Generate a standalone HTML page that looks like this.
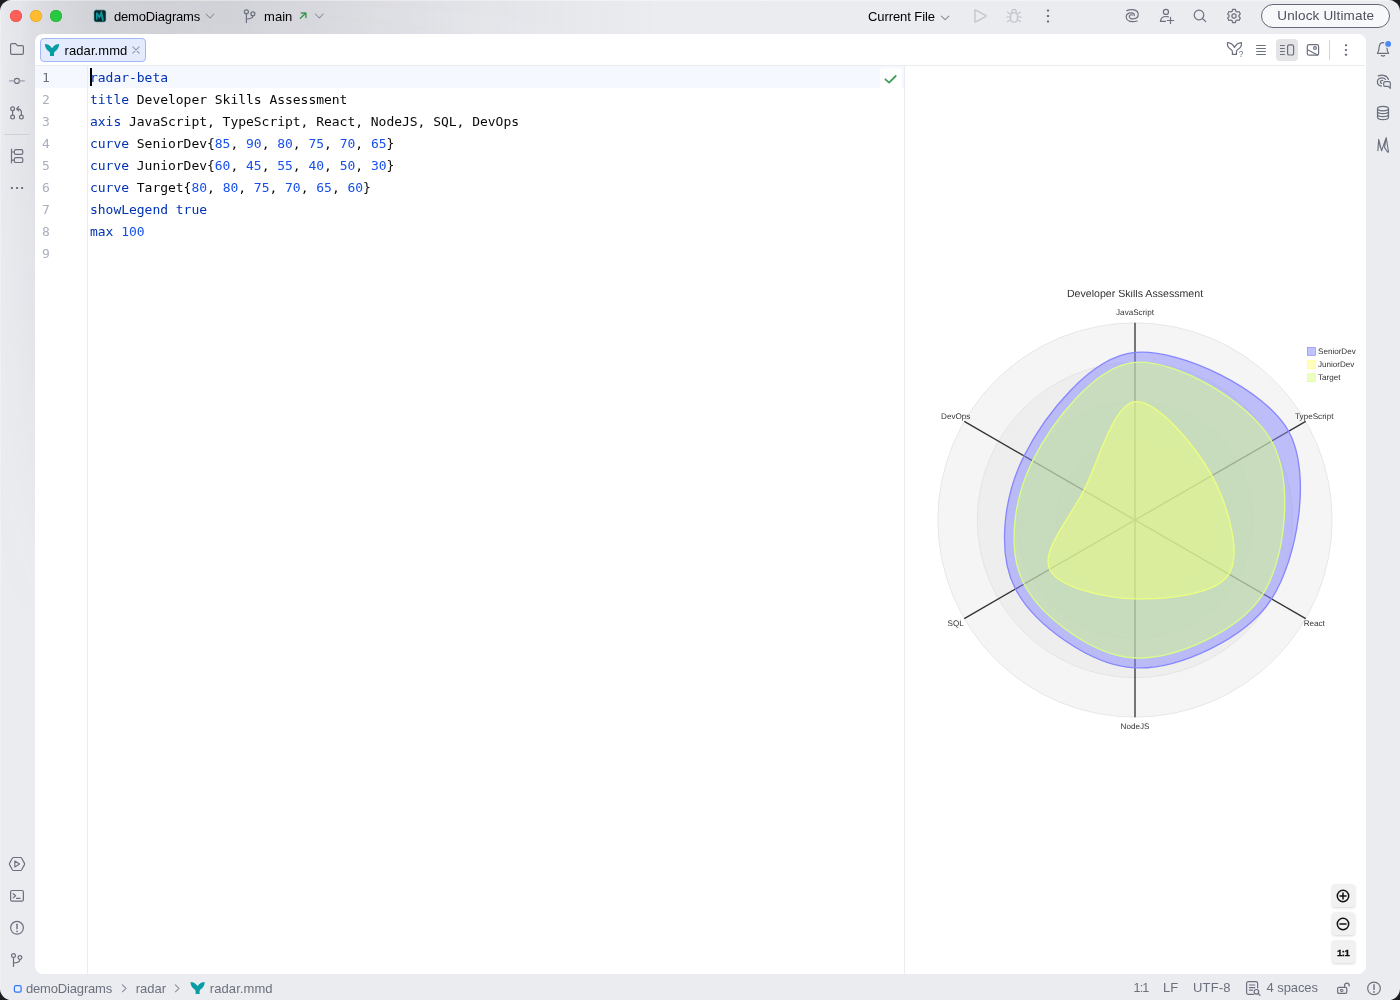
<!DOCTYPE html>
<html lang="en">
<head>
<meta charset="utf-8">
<title>radar.mmd</title>
<style>
*{box-sizing:border-box;margin:0;padding:0}
html,body{width:1400px;height:1000px;overflow:hidden;background:#1b1c1f;font-family:"Liberation Sans",sans-serif;}
.win{will-change:transform;position:absolute;left:0;top:0;width:1400px;height:1000px;border-radius:11.5px;background:#ebecf0;overflow:hidden;}
.tgrad{position:absolute;left:0;top:0;width:700px;height:700px;background:
 linear-gradient(to right, rgba(98,98,112,.015) 0px, rgba(98,98,112,.03) 8px, rgba(98,98,112,.055) 20px, rgba(98,98,112,.10) 35px, rgba(98,98,112,.13) 48px, rgba(98,98,112,.185) 90px, rgba(98,98,112,.205) 150px, rgba(98,98,112,.185) 240px, rgba(98,98,112,.14) 320px, rgba(98,98,112,.08) 430px, rgba(98,98,112,.03) 540px, rgba(98,98,112,0) 660px);
 -webkit-mask-image:linear-gradient(to bottom, #000 0px, rgba(0,0,0,.92) 34px, rgba(0,0,0,.85) 110px, rgba(0,0,0,.45) 330px, rgba(0,0,0,.12) 520px, transparent 640px);mask-image:linear-gradient(to bottom, #000 0px, rgba(0,0,0,.92) 34px, rgba(0,0,0,.85) 110px, rgba(0,0,0,.45) 330px, rgba(0,0,0,.12) 520px, transparent 640px);}
.thl{position:absolute;left:0;top:0;width:1400px;height:1000px;background:linear-gradient(to bottom, rgba(255,255,255,.55) 0px, rgba(255,255,255,0) 1.5px),linear-gradient(to right, rgba(255,255,255,.4) 0px, rgba(255,255,255,0) 1.5px)}
.abs{position:absolute}
.ui{font-size:13px;color:#000;white-space:nowrap;line-height:16px}
svg.ic{position:absolute;overflow:visible;fill:none;stroke:#6c707e;stroke-width:1.2;stroke-linecap:round;stroke-linejoin:round}
.island{position:absolute;left:35px;top:34px;width:1330.6px;height:940px;background:#fff;border-radius:8px;overflow:hidden}
.tabline{position:absolute;left:0;top:31px;width:1330px;height:1px;background:#ebecf0}
.tab{position:absolute;left:5.2px;top:4px;width:105.5px;height:24px;border:1px solid #a0b9f5;background:#e3ebfd;border-radius:4px}
.gutline{position:absolute;left:52px;top:32px;width:1px;height:908px;background:#ebecf0}
.split{position:absolute;left:869px;top:32px;width:1px;height:908px;background:#ebecf0}
.curline{position:absolute;left:0;top:32px;width:869px;height:22px;background:#f5f8fe}
.code{position:absolute;left:55px;top:33px;font-family:"DejaVu Sans Mono","Liberation Mono",monospace;font-size:13px;letter-spacing:-.027px;line-height:22px;color:#080808;white-space:pre}
.code .k{color:#0033b3}.code .n{color:#1750eb}
.ln{position:absolute;left:7px;top:33px;font-family:"DejaVu Sans Mono","Liberation Mono",monospace;font-size:13px;line-height:22px;color:#a9aebe;white-space:pre}
.ln b{font-weight:normal;color:#6c707e}
.caret{position:absolute;left:55px;top:34.2px;width:2px;height:17.4px;background:#000}
.radar{position:absolute;left:870px;top:256px;width:460px;height:460px;font-family:"Liberation Sans",sans-serif;text-rendering:geometricPrecision}
.radar text.al{font-size:12.35px;fill:#333;text-anchor:middle;dominant-baseline:middle}
.radar text.lt{font-size:12.3px;fill:#333;dominant-baseline:hanging}
.radar text.tt{font-size:16.15px;fill:#333;text-anchor:middle;dominant-baseline:hanging}
.zb{position:absolute;left:1296.5px;width:23px;height:22.5px;background:#f1f1f1;border-radius:3.5px;box-shadow:0 .5px 2.5px rgba(0,0,0,.16)}
.st{position:absolute;top:981px;font-size:13px;line-height:16px;color:#6c707e;white-space:nowrap}
</style>
</head>
<body>
<div class="win">
<div class="tgrad"></div><div class="thl"></div>

<!-- traffic lights -->
<div class="abs" style="left:10px;top:10px;width:12px;height:12px;border-radius:50%;background:#fe5f57;box-shadow:inset 0 0 0 .5px #e14640"></div>
<div class="abs" style="left:30px;top:10px;width:12px;height:12px;border-radius:50%;background:#febc2e;box-shadow:inset 0 0 0 .5px #e0a028"></div>
<div class="abs" style="left:50px;top:10px;width:12px;height:12px;border-radius:50%;background:#28c840;box-shadow:inset 0 0 0 .5px #1eab2f"></div>

<!-- project widget -->
<div class="ui abs" style="left:114px;top:9px;letter-spacing:-.17px">demoDiagrams</div>

<!-- branch widget -->
<div class="ui abs" style="left:264px;top:9px;letter-spacing:.05px">main</div>

<!-- run widget -->
<div class="ui abs" style="left:868px;top:9px;letter-spacing:-.08px">Current File</div>

<!-- right header icons -->
<div class="abs" style="left:1261px;top:3.8px;width:129px;height:24px;border:1.5px solid #646878;border-radius:12px;background:#f7f8fa"></div>
<div class="ui abs" style="left:1277.3px;top:8px;font-size:13.5px;letter-spacing:.16px;color:#4d5160">Unlock Ultimate</div>

<!-- left stripe -->


<!-- right stripe -->

<!-- editor island -->
<div class="island">
  <div class="tab"></div>
  <div class="ui abs" style="left:29.6px;top:9px;letter-spacing:.07px">radar.mmd</div>
  <div class="tabline"></div>

  <!-- editor toolbar icons -->
  <div class="abs" style="left:1241px;top:5px;width:22px;height:22px;border-radius:4px;background:#e4e4e7"></div>
  
  <!-- editor -->
  <div class="curline"></div>
  <div class="gutline"></div>
  <div class="split"></div>
  <div class="ln"><b>1</b>
2
3
4
5
6
7
8
9</div>
  <div class="code"><span class="k">radar-beta</span>
<span class="k">title</span> Developer Skills Assessment
<span class="k">axis</span> JavaScript, TypeScript, React, NodeJS, SQL, DevOps
<span class="k">curve</span> SeniorDev{<span class="n">85</span>, <span class="n">90</span>, <span class="n">80</span>, <span class="n">75</span>, <span class="n">70</span>, <span class="n">65</span>}
<span class="k">curve</span> JuniorDev{<span class="n">60</span>, <span class="n">45</span>, <span class="n">55</span>, <span class="n">40</span>, <span class="n">50</span>, <span class="n">30</span>}
<span class="k">curve</span> Target{<span class="n">80</span>, <span class="n">80</span>, <span class="n">75</span>, <span class="n">70</span>, <span class="n">65</span>, <span class="n">60</span>}
<span class="k">showLegend</span> <span class="k">true</span>
<span class="k">max</span> <span class="n">100</span>
</div>
  <div class="caret"></div>
  <div class="abs" style="left:845px;top:33.7px;width:22.3px;height:24px;background:#fff;border-radius:3.5px 3.5px 0 0"></div>

  <!-- preview -->
  <svg class="radar" viewBox="-350 -350 700 700">
<g>
<circle r="60" fill="#DEDEDE" fill-opacity="0.3" stroke="#DEDEDE" stroke-width="1"/>
<circle r="120" fill="#DEDEDE" fill-opacity="0.3" stroke="#DEDEDE" stroke-width="1"/>
<circle r="180" fill="#DEDEDE" fill-opacity="0.3" stroke="#DEDEDE" stroke-width="1"/>
<circle r="240" fill="#DEDEDE" fill-opacity="0.3" stroke="#DEDEDE" stroke-width="1"/>
<circle r="300" fill="#DEDEDE" fill-opacity="0.3" stroke="#DEDEDE" stroke-width="1"/>
<line x1="0" y1="0" x2="0" y2="-300" stroke="#333" stroke-width="2"/>
<text x="0" y="-315" class="al">JavaScript</text>
<line x1="0" y1="0" x2="259.81" y2="-150" stroke="#333" stroke-width="2"/>
<text x="272.8" y="-157.5" class="al">TypeScript</text>
<line x1="0" y1="0" x2="259.81" y2="150" stroke="#333" stroke-width="2"/>
<text x="272.8" y="157.5" class="al">React</text>
<line x1="0" y1="0" x2="0" y2="300" stroke="#333" stroke-width="2"/>
<text x="0" y="315" class="al">NodeJS</text>
<line x1="0" y1="0" x2="-259.81" y2="150" stroke="#333" stroke-width="2"/>
<text x="-272.8" y="157.5" class="al">SQL</text>
<line x1="0" y1="0" x2="-259.81" y2="-150" stroke="#333" stroke-width="2"/>
<text x="-272.8" y="-157.5" class="al">DevOps</text>
<path d="M0,-255 C68.46,-261.38 198.49,-198.75 233.83,-135 C269.16,-71.25 247.6,58.8 207.85,120 C168.1,181.2 66.25,227.55 0,225 C-66.25,222.45 -153.16,159.83 -181.87,105 C-210.57,50.18 -199.79,-36.3 -168.87,-97.5 C-137.96,-158.7 -68.46,-248.62 0,-255 Z" fill="hsl(240,100%,76.27%)" fill-opacity="0.5" stroke="hsl(240,100%,76.27%)" stroke-width="2"/>
<path d="M0,-180 C33.13,-183.82 92.62,-112.12 116.91,-67.5 C141.21,-22.88 162.77,50.62 142.89,82.5 C123.02,114.37 46.38,121.27 0,120 C-46.38,118.73 -116.65,103.05 -129.9,75 C-143.15,46.95 -100.03,-1.65 -77.94,-45 C-55.86,-88.35 -33.13,-176.18 0,-180 Z" fill="hsl(60,100%,73.53%)" fill-opacity="0.5" stroke="hsl(60,100%,73.53%)" stroke-width="2"/>
<path d="M0,-240 C61.83,-245.1 174.72,-179.93 207.85,-120 C240.97,-60.08 230.19,56.4 194.86,112.5 C159.52,168.6 61.83,212.55 0,210 C-61.83,207.45 -142.37,148.5 -168.87,97.5 C-195.38,46.5 -184.59,-32.62 -155.88,-90 C-127.18,-147.38 -61.83,-234.9 0,-240 Z" fill="hsl(80,100%,76.27%)" fill-opacity="0.5" stroke="hsl(80,100%,76.27%)" stroke-width="2"/>
<g transform="translate(262.5,-262.5)"><rect width="12" height="12" fill="hsl(240,100%,76.27%)" fill-opacity="0.5" stroke="hsl(240,100%,76.27%)"/><text x="16" y="1.2" class="lt">SeniorDev</text></g>
<g transform="translate(262.5,-242.5)"><rect width="12" height="12" fill="hsl(60,100%,73.53%)" fill-opacity="0.5" stroke="hsl(60,100%,73.53%)"/><text x="16" y="1.2" class="lt">JuniorDev</text></g>
<g transform="translate(262.5,-222.5)"><rect width="12" height="12" fill="hsl(80,100%,76.27%)" fill-opacity="0.5" stroke="hsl(80,100%,76.27%)"/><text x="16" y="1.2" class="lt">Target</text></g>
<text x="0" y="-350" class="tt">Developer Skills Assessment</text>
</g></svg>

  <div class="zb" style="top:850.5px"></div>
  <div class="zb" style="top:878.5px"></div>
  <div class="zb" style="top:906.5px"></div>
  <div class="abs" style="left:1296.5px;top:906px;width:23px;height:24px;line-height:24px;text-align:center;font-size:9.6px;font-weight:bold;color:#111;letter-spacing:-.45px;-webkit-text-stroke:.3px #111;padding-left:.5px;padding-top:1px">1:1</div>
</div>

<svg class="ic" style="left:0;top:0" width="1400" height="1000" viewBox="0 0 1400 1000">
<!-- project icon -->
<rect x="94.2" y="10.2" width="11.5" height="11.5" rx="2" fill="#04292d" stroke="#0a5258" stroke-width=".5"/>
<path d="M96 19.7 V12.4 H97.5 L99.3 15.6 L101.1 11.1 H102 L104 20.7 H102 L100.9 16 L99.6 18.6 H99 L97.5 15.8 V19.7 Z" fill="#0c959c" stroke="none"/>
<path d="M206 14 L210 18 L214 14" stroke="#878b98" stroke-width="1.05"/>
<!-- branch -->
<circle cx="246.4" cy="11.8" r="2"/><circle cx="252.9" cy="13.8" r="2"/>
<path d="M246.4 13.8 V22.6 M252.9 15.8 C252.9 18 251 19 246.4 19"/>
<path d="M300.4 18.3 L305.8 12.9 M301.4 12.9 H305.9 V17.4" stroke="#3a9a55" stroke-width="1.45"/>
<path d="M315.4 14 L319.3 18 L323.2 14" stroke="#878b98" stroke-width="1.05"/>
<!-- run widget -->
<path d="M941.3 16.1 L945.1 19.7 L948.9 16.1" stroke="#878b98" stroke-width="1.05"/>
<path d="M975 10.6 V21.4 Q975 22.4 975.9 21.9 L985.6 16.6 Q986.4 16 985.6 15.4 L975.9 10.1 Q975 9.6 975 10.6 Z" stroke="#c3c6cf" stroke-width="1.4"/>
<g stroke="#c3c6cf" stroke-width="1.25">
<rect x="1010.6" y="12.7" width="6.8" height="9.4" rx="3.3"/>
<path d="M1011.7 12.7 C1011.7 8.4 1016.3 8.4 1016.3 12.7"/>
<path d="M1010.6 14.2 L1007.6 12.2 M1010.6 17 H1007 M1010.6 19.6 L1007.6 21.6 M1017.4 14.2 L1020.4 12.2 M1017.4 17 H1021 M1017.4 19.6 L1020.4 21.6"/>
</g>
<g fill="#6c707e" stroke="none"><rect x="1046.9" y="9.4" width="2.2" height="2.2" rx=".5"/><rect x="1046.9" y="14.9" width="2.2" height="2.2" rx=".5"/><rect x="1046.9" y="20.4" width="2.2" height="2.2" rx=".5"/></g>
<!-- AI swirl -->
<path d="M1126.9 10.6 C1128.6 9.7 1130.5 9.5 1132.4 9.6 C1135.8 9.8 1138.2 11.8 1138.2 14.6 C1138.2 17.2 1136 18.9 1133 18.9 C1130.6 18.9 1129.2 17.8 1129.3 16.4 C1129.4 15.1 1131 14.4 1132.6 15"/><path d="M1134.3 15.6 C1134.6 14 1133.2 12.7 1131.2 12.8 C1128.4 12.9 1126.2 14.4 1126.2 16.8 C1126.2 19.6 1128.8 21.7 1132.4 21.7 C1134.2 21.7 1135.8 21.5 1137.2 21"/>
<!-- add user -->
<circle cx="1165.95" cy="11.9" r="2.55"/><path d="M1165.4 21.4 H1160.4 C1160.8 18.6 1162.8 16.5 1166 16.5 C1166.9 16.5 1167.7 16.6 1168.4 16.8 M1170.5 17.4 V23.6 M1167.3 20.5 H1173.7"/>
<!-- search -->
<circle cx="1199" cy="15" r="4.8"/><path d="M1202.5 18.5 L1205.7 21.7"/>
<!-- gear -->
<path d="M1232.17 11.24 L1232.61 9.45 L1235.39 9.45 L1235.83 11.24 L1237.21 12.04 L1238.98 11.52 L1240.37 13.93 L1239.04 15.20 L1239.04 16.80 L1240.37 18.07 L1238.98 20.48 L1237.21 19.96 L1235.83 20.76 L1235.39 22.55 L1232.61 22.55 L1232.17 20.76 L1230.79 19.96 L1229.02 20.48 L1227.63 18.07 L1228.96 16.80 L1228.96 15.20 L1227.63 13.93 L1229.02 11.52 L1230.79 12.04 Z"/><circle cx="1234" cy="16" r="2.1"/>

<!-- left stripe -->
<path d="M10.6 45 a1.3 1.3 0 0 1 1.3 -1.3 H15.6 L17.4 45.6 H22.1 a1.3 1.3 0 0 1 1.3 1.3 V53 a1.3 1.3 0 0 1 -1.3 1.3 H11.9 a1.3 1.3 0 0 1 -1.3 -1.3 Z"/>
<circle cx="16.9" cy="80.9" r="2.5"/><path d="M9.6 80.9 H14.4 M19.4 80.9 H24.3" stroke="#9a9eab" stroke-width="1.3"/>
<circle cx="12.6" cy="108.8" r="1.9"/><circle cx="12.6" cy="117.1" r="1.9"/><circle cx="21.4" cy="117.1" r="1.9"/>
<path d="M12.6 110.7 V115.2 M21.4 115.2 V112 C21.4 109.8 20 108.8 17 108.8 M18.7 106.7 L16.6 108.8 L18.7 110.9"/>
<path d="M5 134.5 H29" stroke="#cfd1d8" stroke-width="1"/>
<path d="M11.5 149.2 V162.8 M11.5 152 H14.3 M11.5 160.1 H14.3"/><rect x="14.3" y="149.6" width="8.5" height="4.8" rx="1.6"/><rect x="14.3" y="157.7" width="8.5" height="4.8" rx="1.6"/>
<g fill="#6c707e" stroke="none"><rect x="10.9" y="187" width="2" height="2" rx=".3"/><rect x="16.1" y="187" width="2" height="2" rx=".3"/><rect x="21.1" y="187" width="2" height="2" rx=".3"/></g>
<!-- bottom-left -->
<path d="M13.4 857.5 H20.6 Q21.2 857.5 21.5 858 L24.5 863.4 Q24.8 864 24.5 864.6 L21.5 870 Q21.2 870.5 20.6 870.5 H13.4 Q12.8 870.5 12.5 870 L9.5 864.6 Q9.2 864 9.5 863.4 L12.5 858 Q12.8 857.5 13.4 857.5 Z"/><path d="M14.8 861 L19.6 864 L14.8 867 Z" stroke-width="1.1"/>
<rect x="10.6" y="890.5" width="12.8" height="10.6" rx="1.7"/><path d="M13.2 893.7 L15.6 895.8 L13.2 897.9 M16.6 898.4 H20"/>
<circle cx="17" cy="927.8" r="6.4"/><path d="M17 924.2 V928.8" stroke-width="1.4"/><circle cx="17" cy="931.3" r=".85" fill="#6c707e" stroke="none"/>
<circle cx="13.5" cy="955.6" r="1.9"/><circle cx="19.9" cy="957.5" r="1.9"/><path d="M13.5 957.5 V966.4 M19.9 959.4 C19.9 961.8 18 962.8 13.5 962.8"/>

<!-- right stripe -->
<path d="M1377.4 53.3 C1378.9 51.4 1378.9 49.8 1379.1 47.5 C1379.4 44.5 1380.8 42.7 1383 42.7 C1385.2 42.7 1386.6 44.5 1386.9 47.5 C1387.1 49.8 1387.1 51.4 1388.6 53.3 Z"/><path d="M1381.4 55.6 Q1383 56.8 1384.6 55.6" stroke-width="1.3"/>
<circle cx="1388.15" cy="43.9" r="4.1" fill="#ebecf0" stroke="none"/>
<circle cx="1388.15" cy="43.9" r="2.9" fill="#4b87f5" stroke="none"/>
<path d="M1378.3 75.9 C1380 75.2 1382 75 1383.6 75.3 C1386 75.8 1387.8 77.3 1388.5 79.5 M1381.5 86.2 C1379 85.6 1377.3 84 1377.4 81.8 C1377.5 79.4 1379.6 77.8 1382.3 77.8 C1383.6 77.8 1384.7 78.4 1385.5 79.3 M1382.7 80.3 C1381.4 80.2 1380.4 80.9 1380.4 81.9 C1380.4 82.6 1380.8 83.1 1381.5 83.4"/><path d="M1385 81.6 H1389 a1.3 1.3 0 0 1 1.3 1.3 V88.3 L1388.3 86.3 H1385 a1.3 1.3 0 0 1 -1.3 -1.3 V82.9 a1.3 1.3 0 0 1 1.3 -1.3 Z"/>
<ellipse cx="1383" cy="108.6" rx="5.5" ry="2.3"/><path d="M1377.5 108.4 V117.2 C1377.5 118.5 1380 119.6 1383 119.6 C1386 119.6 1388.5 118.5 1388.5 117.2 V108.4 M1377.5 111.3 C1377.5 112.6 1380 113.7 1383 113.7 C1386 113.7 1388.5 112.6 1388.5 111.3 M1377.5 114.2 C1377.5 115.5 1380 116.6 1383 116.6 C1386 116.6 1388.5 115.5 1388.5 114.2"/>
<path d="M1377.9 150.6 L1378.7 139.4 L1381.6 150.8 L1386.2 137.6 L1388.5 152 M1378.9 140.4 L1380.3 147.4 M1386.2 137.6 L1384.5 147.4 L1387.7 152.2" stroke-width="1.1"/>

<!-- tab icon + close -->
<path id="mm" d="M44.9 44 C47.5 44 50.5 45.5 52 48.2 C53.5 45.5 56.5 44 59.1 44 C59.1 47.5 57.3 50 54.9 51.6 C54.2 52.1 54 52.8 54 53.6 V56 H50 V53.6 C50 52.8 49.8 52.1 49.1 51.6 C46.7 50 44.9 47.5 44.9 44 Z" fill="#069da4" stroke="none"/>
<path d="M132.8 46.8 L139.2 53.2 M139.2 46.8 L132.8 53.2" stroke="#9397a4" stroke-width="1.05"/>

<!-- editor toolbar -->
<path d="M1227.5 42.7 C1230.5 43 1233.2 44.8 1234.5 47.5 C1235.8 44.8 1238.5 43 1241.4 42.7 C1241.9 45.8 1240.3 48.2 1237.8 49.6 C1236.7 50.3 1236.4 51 1236.4 52 V54.4 H1232.4 V52 C1232.4 51 1232.1 50.3 1231 49.6 C1228.6 48.2 1227 45.8 1227.5 42.7 Z"/><text x="1238.7" y="56.9" font-size="8.3" font-family="Liberation Sans,sans-serif" fill="#6c707e" stroke="none">?</text>
<path d="M1256.2 45.5 H1265.8 M1256.2 48.5 H1265.8 M1256.2 51.5 H1265.8 M1256.2 54.5 H1265.8" stroke-linecap="butt" stroke-width="1.1"/>
<path d="M1280 45.5 H1284.8 M1280 48.5 H1284.8 M1280 51.5 H1284.8 M1280 54.5 H1284.8" stroke-linecap="butt" stroke-width="1.1"/><rect x="1287.6" y="44.8" width="6" height="10.2" rx="1.6"/>
<rect x="1307.3" y="44.6" width="11.3" height="10.6" rx="1.8"/><circle cx="1315" cy="48.1" r="1.4"/><path d="M1307.6 49.8 L1317.6 55"/>
<path d="M1329.5 40 V60" stroke="#d3d5db" stroke-width="1" stroke-linecap="butt"/>
<g fill="#6c707e" stroke="none"><rect x="1345" y="44.2" width="2" height="2" rx=".4"/><rect x="1345" y="49" width="2" height="2" rx=".4"/><rect x="1345" y="53.8" width="2" height="2" rx=".4"/></g>
<!-- check -->
<path d="M885.4 79.3 L889.1 82.6 L895.7 76" stroke="#409d5c" stroke-width="1.8"/>

<!-- zoom buttons -->
<g stroke="#111" stroke-width="1.5"><circle cx="1343" cy="896" r="5.7"/><path d="M1340 896 H1346 M1343 893 V899"/><circle cx="1343" cy="924" r="5.7"/><path d="M1340 924 H1346"/></g>

<!-- status bar -->
<rect x="14.4" y="985.6" width="6.7" height="6.5" rx="1.7" stroke="#3574f0" fill="#e7effd" stroke-width="1.25"/>
<path d="M122.4 984.8 L126 988.3 L122.4 991.8 M175.4 984.8 L179 988.3 L175.4 991.8" stroke="#878b98" stroke-width="1.05"/>
<path transform="translate(145.6,937.9)" d="M44.9 44 C47.5 44 50.5 45.5 52 48.2 C53.5 45.5 56.5 44 59.1 44 C59.1 47.5 57.3 50 54.9 51.6 C54.2 52.1 54 52.8 54 53.6 V56 H50 V53.6 C50 52.8 49.8 52.1 49.1 51.6 C46.7 50 44.9 47.5 44.9 44 Z" fill="#069da4" stroke="none"/>
<g transform="translate(1245,980)"><path d="M8.6 14.4 H3.2 a1.6 1.6 0 0 1 -1.6 -1.6 V3.2 a1.6 1.6 0 0 1 1.6 -1.6 H11 a1.6 1.6 0 0 1 1.6 1.6 V8 M4.4 5 H9.8 M4.4 7.6 H9.8 M4.4 10.2 H7.4"/><circle cx="11.4" cy="11.8" r="2.3"/><path d="M13.1 13.5 L15 15.4"/></g>
<g transform="translate(1335,980)"><rect x="2.6" y="7.4" width="9.2" height="6" rx="1.3"/><rect x="5.6" y="9.6" width="2.4" height="1.8" rx=".3" stroke-width="1"/><path d="M9.6 7.4 V5.4 a2.3 2.3 0 0 1 4.6 0 V6"/></g>
<circle cx="1374" cy="988.4" r="6.3"/><path d="M1374 984.8 V989.4" stroke-width="1.4"/><circle cx="1374" cy="991.9" r=".85" fill="#6c707e" stroke="none"/>
</svg>

<!-- status bar -->
<div class="st" style="left:26px;letter-spacing:-.17px">demoDiagrams</div>
<div class="st" style="left:135.7px">radar</div>
<div class="st" style="left:209.8px;letter-spacing:.08px">radar.mmd</div>

<div class="st" style="left:1133.6px;top:980px;letter-spacing:-.9px;font-size:12.6px">1:1</div>
<div class="st" style="left:1163px;top:980px">LF</div>
<div class="st" style="left:1193px;top:980px;letter-spacing:.15px">UTF-8</div>
<div class="st" style="left:1266.6px;top:980px;letter-spacing:-.1px">4 spaces</div>

</div>
</body>
</html>
